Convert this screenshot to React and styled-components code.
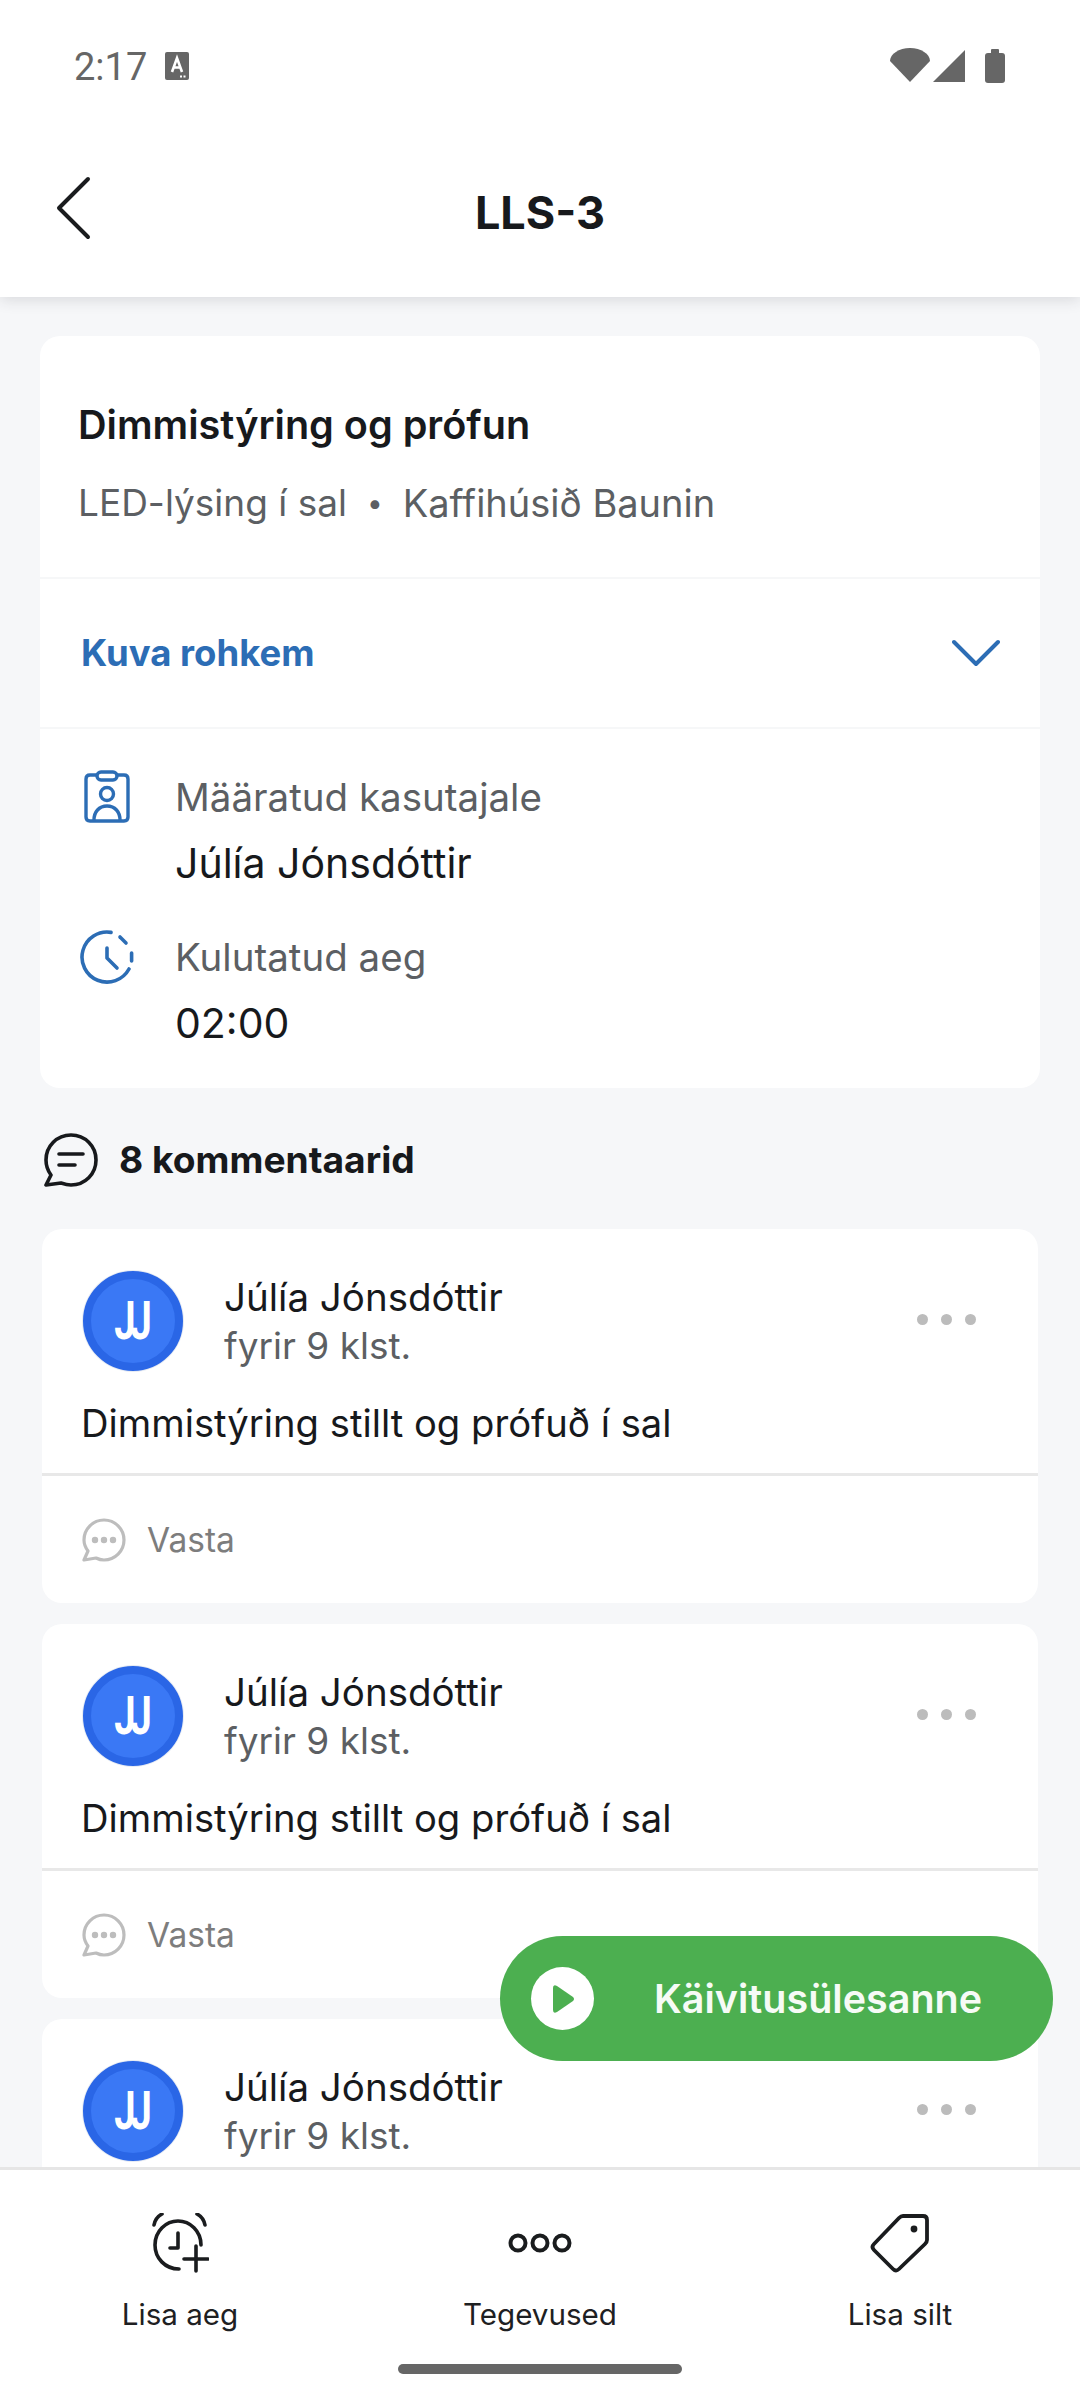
import React from "react";
import styled, { createGlobalStyle } from "styled-components";

const GlobalStyle = createGlobalStyle`
  html, body {
    margin: 0;
    padding: 0;
    background: #fff;
  }
  * {
    box-sizing: border-box;
  }
`;

const Screen = styled.div`
  position: relative;
  width: 1080px;
  height: 2400px;
  display: flex;
  flex-direction: column;
  overflow: hidden;
  background: #fff;
  font-family: Inter, "Noto Sans", sans-serif;
  color: #1a1c1e;
`;

const Header = styled.header`
  position: relative;
  z-index: 2;
  background: #fff;
  box-shadow: 0 3px 14px rgba(40, 44, 52, 0.14);
`;

const StatusBar = styled.div`
  height: 132px;
  display: flex;
  align-items: center;
  justify-content: space-between;
  padding: 0 75px 0 74px;
  color: #666;
`;

const StatusLeft = styled.div`
  display: flex;
  align-items: center;
  gap: 18px;
`;

const Time = styled.span`
  font-family: Roboto, sans-serif;
  font-size: 38px;
  line-height: 44px;
  padding-top: 2px;
`;

const StatusIcons = styled.div`
  display: flex;
  align-items: center;
`;

const AppBar = styled.div`
  position: relative;
  height: 165px;
  padding-bottom: 4px;
  display: flex;
  align-items: center;
  justify-content: center;
`;

const BackButton = styled.div`
  position: absolute;
  left: 55px;
  top: 44px;
  display: flex;
`;

const Title = styled.h1`
  margin: 0;
  font-size: 45px;
  font-weight: 700;
  color: #17191c;
`;

const Scroll = styled.main`
  flex: 1;
  min-height: 0;
  overflow: hidden;
  background: #f6f7f9;
  padding: 39px 40px 0;
`;

const TaskCard = styled.section`
  background: #fff;
  border-radius: 20px;
`;

const TaskIntro = styled.div`
  padding: 59px 38px 44px;
  border-bottom: 2px solid #f6f7f8;
`;

const TaskTitle = styled.div`
  font-size: 39.6px;
  line-height: 60px;
  font-weight: 600;
  color: #17191c;
`;

const TaskMeta = styled.div`
  margin-top: 18px;
  display: flex;
  align-items: center;
  gap: 20px;
  font-size: 37px;
  line-height: 60px;
  color: #5c5f63;
`;

const MetaBullet = styled.span`
  font-size: 28px;
`;

const MetaPlace = styled.span`
  font-size: 38px;
`;

const ExpandRow = styled.div`
  height: 150px;
  display: flex;
  align-items: center;
  justify-content: space-between;
  padding: 0 40px 0 41px;
  border-bottom: 2px solid #f6f7f8;
  font-size: 36.5px;
  font-weight: 700;
  color: #2c6db5;
`;

const Fields = styled.div`
  display: flex;
  flex-direction: column;
  gap: 27px;
  padding: 35px 40px 31px;
`;

const Field = styled.div`
  display: flex;
  gap: 41px;
`;

const FieldIcon = styled.div`
  width: 54px;
  padding-top: 6px;
  display: flex;
  justify-content: center;
  align-items: flex-start;
`;

const FieldLabel = styled.div`
  font-size: 38.5px;
  line-height: 66px;
  color: #5c5f63;
`;

const FieldValue = styled.div`
  font-size: 41px;
  line-height: 67px;
  color: #17191c;
`;

const CommentsHeading = styled.h2`
  height: 141px;
  margin: 0;
  padding: 2px 0 0 4px;
  display: flex;
  align-items: center;
  gap: 21px;
  font-size: 37.2px;
  font-weight: 700;
  color: #17191c;
`;

const CommentList = styled.div`
  display: flex;
  flex-direction: column;
  gap: 21px;
  margin: 0 2px;
`;

const CommentCard = styled.article`
  min-height: 200px;
  background: #fff;
  border-radius: 20px;
`;

const CommentHead = styled.div`
  display: flex;
  align-items: center;
  gap: 41px;
  padding: 42px 42px 0 41px;
`;

const Avatar = styled.div`
  flex: none;
  width: 100px;
  height: 100px;
  display: flex;
  align-items: center;
  justify-content: center;
  border: 8px solid #2a66e6;
  border-radius: 50%;
  background: #3a78f5;
  box-shadow: 0 0 0 1px #e6ebf3;
  color: #fff;
`;

const Initials = styled.span`
  display: inline-block;
  font-family: Roboto, sans-serif;
  font-size: 53px;
  font-weight: 700;
  letter-spacing: -7px;
  padding-right: 7px;
  transform: scaleX(0.72);
`;

const Author = styled.div`
  flex: 1;
`;

const AuthorName = styled.div`
  font-size: 38.5px;
  line-height: 50px;
  color: #17191c;
`;

const Posted = styled.div`
  margin-top: -1px;
  font-size: 37px;
  line-height: 50px;
  color: #5c5f63;
`;

const MoreDots = styled.div`
  display: flex;
  gap: 13px;
  margin: 0 20px 3px 0;
`;

const MoreDot = styled.span`
  width: 11px;
  height: 11px;
  border-radius: 50%;
  background: #bcbcbc;
`;

const CommentBody = styled.p`
  margin: 22px 0 0;
  padding: 0 39px;
  font-size: 38.2px;
  line-height: 60px;
  color: #17191c;
`;

const CommentFooter = styled.div`
  margin-top: 20px;
  height: 130px;
  display: flex;
  align-items: center;
  gap: 21px;
  padding: 0 40px;
  border-top: 3px solid #e8e8e8;
  font-size: 33.5px;
  color: #7d7d7d;
`;

const StartButton = styled.button`
  position: absolute;
  z-index: 3;
  left: 500px;
  top: 1936px;
  width: 553px;
  height: 125px;
  display: flex;
  align-items: center;
  gap: 60px;
  padding: 0 0 0 31px;
  border: none;
  border-radius: 63px;
  background: #4caf50;
  color: #f6fbf6;
  font-family: inherit;
  font-size: 39.5px;
  font-weight: 600;
`;

const PlayCircle = styled.span`
  width: 63px;
  height: 63px;
  display: flex;
  align-items: center;
  justify-content: center;
  border-radius: 50%;
  background: #fff;
`;

const BottomBar = styled.nav`
  position: relative;
  z-index: 2;
  height: 233px;
  background: #fff;
  border-top: 3px solid #e6e6e6;
`;

const Actions = styled.div`
  display: grid;
  grid-template-columns: repeat(3, 1fr);
  padding-top: 42px;
`;

const Action = styled.div`
  display: flex;
  flex-direction: column;
  align-items: center;
`;

const ActionIcon = styled.div`
  height: 62px;
  display: flex;
  align-items: center;
  justify-content: center;
`;

const ActionLabel = styled.span`
  margin-top: 20px;
  font-size: 29.6px;
  line-height: 40px;
  color: #1e2022;
`;

const HomeIndicator = styled.div`
  width: 284px;
  height: 10px;
  margin: 30px auto 0;
  border-radius: 5px;
  background: #666;
`;

const KeyboardIcon = () => (
  <svg width="24" height="28" viewBox="0 0 24 28">
    <rect width="24" height="28" rx="2" fill="#666" />
    <path d="M7 20 L12 6 L17 20 M8.8 15.5 H15.2" fill="none" stroke="#fff" strokeWidth="2.6" />
    <path d="M15 24.5 h2 M18.5 24.5 h2" stroke="#fff" strokeWidth="2" />
  </svg>
);

const SignalIcons = () => (
  <svg width="115" height="36" viewBox="0 0 115 36" fill="#666">
    <path d="M0 13 C0 6 9 0 20 0 C31 0 40 6 40 13 L20 34 Z" />
    <path d="M43 34 L75 2 V34 Z" />
    <rect x="95" y="5" width="20" height="30" rx="3" />
    <rect x="101" y="1" width="8" height="6" rx="1" />
  </svg>
);

const BackIcon = () => (
  <svg width="36" height="64" viewBox="0 0 36 64" fill="none" stroke="#1a1c1e" strokeWidth="4" strokeLinecap="round" strokeLinejoin="round">
    <path d="M33 3 L4 32 L33 61" />
  </svg>
);

const ChevronIcon = () => (
  <svg width="48" height="28" viewBox="0 0 48 28" fill="none" stroke="#2c6db5" strokeWidth="4" strokeLinecap="round" strokeLinejoin="round">
    <path d="M2 3 L24 25 L46 3" />
  </svg>
);

const BadgeIcon = () => (
  <svg width="46" height="53" viewBox="0 0 46 53" fill="none" stroke="#2c6db5" strokeWidth="3.4" strokeLinecap="round" strokeLinejoin="round">
    <path d="M12 5 H6 Q2 5 2 9 V47 Q2 51 6 51 H40 Q44 51 44 47 V9 Q44 5 40 5 H34" />
    <rect x="13" y="2" width="20" height="8" rx="4" />
    <circle cx="23" cy="24" r="6.5" />
    <path d="M10 50 C10 42 15 36 23 36 C31 36 36 42 36 50" />
  </svg>
);

const ClockIcon = () => (
  <svg width="54" height="54" viewBox="0 0 54 54" fill="none" stroke="#2c6db5" strokeWidth="3.6" strokeLinecap="round" strokeLinejoin="round">
    <path d="M31 2.4 A25 25 0 1 0 49 39" />
    <path d="M40 7 L46 13" />
    <path d="M51.6 23 V31" />
    <path d="M27 18 V28 L37 38" />
  </svg>
);

const ChatIcon = () => (
  <svg width="54" height="54" viewBox="0 0 54 54" fill="none" stroke="#17191c" strokeWidth="3.6" strokeLinecap="round" strokeLinejoin="round">
    <path d="M27 2 C13 2 2 13 2 27 C2 33 4 38 7 42 L2 52 L17 50 C20 51 23 52 27 52 C41 52 52 41 52 27 C52 13 41 2 27 2 Z" />
    <path d="M15 21 H39 M15 32 H31" />
  </svg>
);

const ReplyIcon = () => (
  <svg width="44" height="44" viewBox="0 0 44 44" fill="none" stroke="#bdbdbd" strokeWidth="3.2" strokeLinecap="round" strokeLinejoin="round">
    <path d="M22 2 C11 2 2 11 2 22 C2 26 3 29 6 33 L2 42 L14 40 C16 41 19 42 22 42 C33 42 42 33 42 22 C42 11 33 2 22 2 Z" />
    <circle cx="13" cy="22" r="1.6" fill="#bdbdbd" />
    <circle cx="22" cy="22" r="1.6" fill="#bdbdbd" />
    <circle cx="31" cy="22" r="1.6" fill="#bdbdbd" />
  </svg>
);

const PlayIcon = () => (
  <svg width="24" height="30" viewBox="0 0 24 30" fill="#4caf50">
    <path d="M2 4 Q2 0 6 2 L22 13 Q24 15 22 17 L6 28 Q2 30 2 26 Z" />
  </svg>
);

const AlarmPlusIcon = () => (
  <svg width="58" height="60" viewBox="0 0 58 60" fill="none" stroke="#1a1c1e" strokeWidth="3.6" strokeLinecap="round" strokeLinejoin="round">
    <path d="M28 56 C14 56 4 45 4 32 C4 18 15 8 27 8 C39 8 50 18 50 32" />
    <path d="M3 12 C4 7 7 3 11 1" />
    <path d="M54 12 C53 7 50 3 46 1" />
    <path d="M27 20 V35 H19" />
    <path d="M45 33 V58 M33 46 H57" />
  </svg>
);

const DotsIcon = () => (
  <svg width="64" height="20" viewBox="0 0 64 20" fill="none" stroke="#1a1c1e" strokeWidth="4">
    <circle cx="10" cy="10" r="7.5" />
    <circle cx="32" cy="10" r="7.5" />
    <circle cx="54" cy="10" r="7.5" />
  </svg>
);

const TagIcon = () => (
  <svg width="60" height="60" viewBox="0 0 60 60" fill="none" stroke="#1a1c1e" strokeWidth="3.8" strokeLinecap="round" strokeLinejoin="round">
    <path d="M33 3 H53 Q57 3 57 7 V27 Q57 29 55 31 L29 56 Q26 59 23 56 L4 37 Q1 34 4 31 L29 5 Q31 3 33 3 Z" />
    <circle cx="44" cy="16" r="3.4" fill="#1a1c1e" stroke="none" />
  </svg>
);

// the third comment runs under the bottom bar, only its head is on screen
const comments = [
  { id: 1, body: "Dimmistýring stillt og prófuð í sal" },
  { id: 2, body: "Dimmistýring stillt og prófuð í sal" },
  { id: 3 },
];

const actions = [
  { label: "Lisa aeg", icon: <AlarmPlusIcon /> },
  { label: "Tegevused", icon: <DotsIcon /> },
  { label: "Lisa silt", icon: <TagIcon /> },
];

export default function App() {
  return (
    <Screen>
      <GlobalStyle />
      <Header>
        <StatusBar>
          <StatusLeft>
            <Time>2:17</Time>
            <KeyboardIcon />
          </StatusLeft>
          <StatusIcons>
            <SignalIcons />
          </StatusIcons>
        </StatusBar>
        <AppBar>
          <BackButton>
            <BackIcon />
          </BackButton>
          <Title>LLS-3</Title>
        </AppBar>
      </Header>

      <Scroll>
        <TaskCard>
          <TaskIntro>
            <TaskTitle>Dimmistýring og prófun</TaskTitle>
            <TaskMeta>
              <span>LED-lýsing í sal</span>
              <MetaBullet>•</MetaBullet>
              <MetaPlace>Kaffihúsið Baunin</MetaPlace>
            </TaskMeta>
          </TaskIntro>
          <ExpandRow>
            <span>Kuva rohkem</span>
            <ChevronIcon />
          </ExpandRow>
          <Fields>
            <Field>
              <FieldIcon>
                <BadgeIcon />
              </FieldIcon>
              <div>
                <FieldLabel>Määratud kasutajale</FieldLabel>
                <FieldValue>Júlía Jónsdóttir</FieldValue>
              </div>
            </Field>
            <Field>
              <FieldIcon>
                <ClockIcon />
              </FieldIcon>
              <div>
                <FieldLabel>Kulutatud aeg</FieldLabel>
                <FieldValue>02:00</FieldValue>
              </div>
            </Field>
          </Fields>
        </TaskCard>

        <CommentsHeading>
          <ChatIcon />
          8 kommentaarid
        </CommentsHeading>

        <CommentList>
          {comments.map((comment) => (
            <CommentCard key={comment.id}>
              <CommentHead>
                <Avatar>
                  <Initials>JJ</Initials>
                </Avatar>
                <Author>
                  <AuthorName>Júlía Jónsdóttir</AuthorName>
                  <Posted>fyrir 9 klst.</Posted>
                </Author>
                <MoreDots>
                  <MoreDot />
                  <MoreDot />
                  <MoreDot />
                </MoreDots>
              </CommentHead>
              {comment.body && (
                <>
                  <CommentBody>{comment.body}</CommentBody>
                  <CommentFooter>
                    <ReplyIcon />
                    Vasta
                  </CommentFooter>
                </>
              )}
            </CommentCard>
          ))}
        </CommentList>
      </Scroll>

      <StartButton>
        <PlayCircle>
          <PlayIcon />
        </PlayCircle>
        Käivitusülesanne
      </StartButton>

      <BottomBar>
        <Actions>
          {actions.map((action) => (
            <Action key={action.label}>
              <ActionIcon>{action.icon}</ActionIcon>
              <ActionLabel>{action.label}</ActionLabel>
            </Action>
          ))}
        </Actions>
        <HomeIndicator />
      </BottomBar>
    </Screen>
  );
}
